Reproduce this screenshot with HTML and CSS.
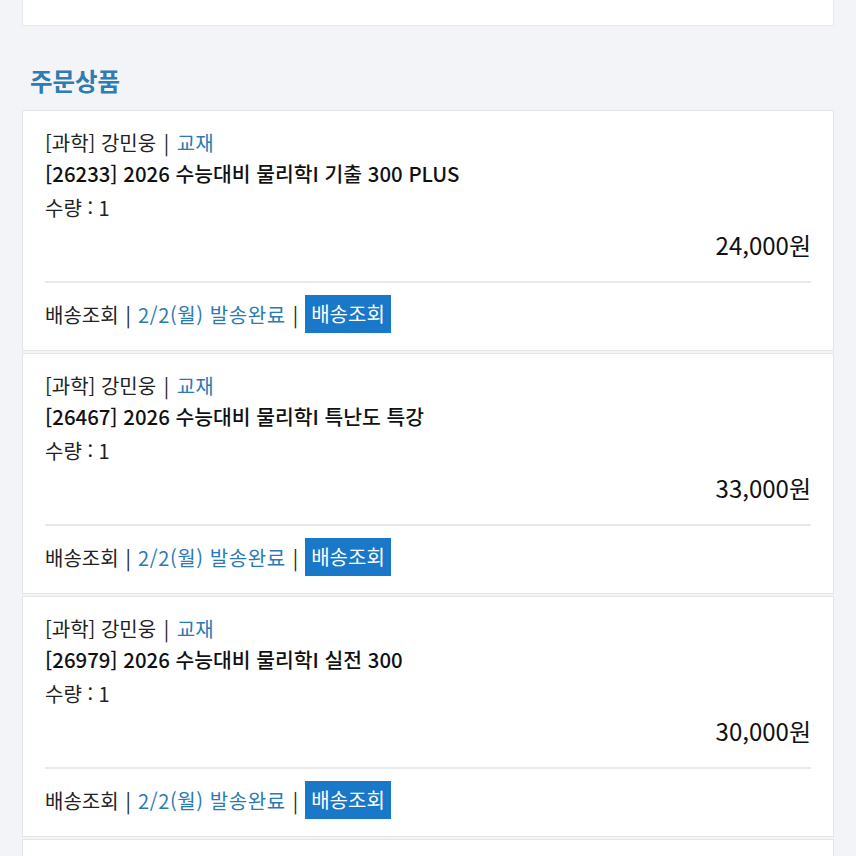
FILE: index.html
```html
<!DOCTYPE html>
<html lang="ko">
<head>
<meta charset="utf-8">
<title>주문상품</title>
<link rel="stylesheet" href="styles.css">
</head>
<body>
<div class="page">
  <div class="top-card"></div>
  <h2 class="section-title">주문상품</h2>
  <div class="list">
    <div class="card">
      <div class="meta">[과학] 강민웅 <span class="bar">|</span> <span class="blue">교재</span></div>
      <div class="name">[26233] 2026 수능대비 물리학I 기출 300 PLUS</div>
      <div class="qty">수량 : 1</div>
      <div class="price">24,000원</div>
      <div class="divider"></div>
      <div class="ship">
        <span>배송조회</span><span class="sep">|</span><span class="blue date">2/2(월) 발송완료</span><span class="sep">|</span><span class="btn">배송조회</span>
      </div>
    </div>
    <div class="card">
      <div class="meta">[과학] 강민웅 <span class="bar">|</span> <span class="blue">교재</span></div>
      <div class="name">[26467] 2026 수능대비 물리학I 특난도 특강</div>
      <div class="qty">수량 : 1</div>
      <div class="price">33,000원</div>
      <div class="divider"></div>
      <div class="ship">
        <span>배송조회</span><span class="sep">|</span><span class="blue date">2/2(월) 발송완료</span><span class="sep">|</span><span class="btn">배송조회</span>
      </div>
    </div>
    <div class="card">
      <div class="meta">[과학] 강민웅 <span class="bar">|</span> <span class="blue">교재</span></div>
      <div class="name">[26979] 2026 수능대비 물리학I 실전 300</div>
      <div class="qty">수량 : 1</div>
      <div class="price">30,000원</div>
      <div class="divider"></div>
      <div class="ship">
        <span>배송조회</span><span class="sep">|</span><span class="blue date">2/2(월) 발송완료</span><span class="sep">|</span><span class="btn">배송조회</span>
      </div>
    </div>
    <div class="card"></div>
  </div>
</div>
</body>
</html>
```
FILE: styles.css
```css
html, body {
  margin: 0;
  padding: 0;
  background: #f3f4f7;
  height: 856px;
  overflow: hidden;
}
body {
  font-family: "Noto Sans CJK KR", "Noto Sans", sans-serif;
  color: #222;
}
.page {
  padding: 0 22px;
}
.top-card {
  height: 25px;
  background: #fff;
  border: 1px solid #e5e6ea;
  border-top: none;
}
.section-title {
  margin: 38px 0 12px 8px;
  font-size: 24.5px;
  line-height: 34px;
  font-weight: 700;
  color: #2d7cb2;
}
.list {
  display: flex;
  flex-direction: column;
  gap: 2px;
}
.card {
  background: #fff;
  border: 1px solid #e3e4e8;
  padding: 17px 22px 17px 22px;
  min-height: 205px;
}
.meta, .name, .qty {
  font-size: 20px;
  line-height: 30px;
}
.bar {
  margin: 0 2px;
  color: #222;
}
.name {
  font-size: 20.4px;
  font-weight: 500;
  color: #111;
}
.qty {
  margin-top: 5px;
}
.price {
  margin-top: 7px;
  text-align: right;
  font-size: 24px;
  line-height: 30px;
  color: #111;
}
.divider {
  margin-top: 21px;
  height: 2px;
  background: #e8e9eb;
}
.ship {
  margin-top: 12px;
  display: flex;
  align-items: center;
  height: 38px;
  font-size: 20px;
}
.sep {
  margin: 0 7px;
  color: #222;
}
.blue {
  color: #2b7bb3;
}
.date {
  letter-spacing: 0.6px;
}
.btn {
  background: #1a78c9;
  color: #fff;
  height: 38px;
  line-height: 38px;
  padding: 0 6px;
}
```
